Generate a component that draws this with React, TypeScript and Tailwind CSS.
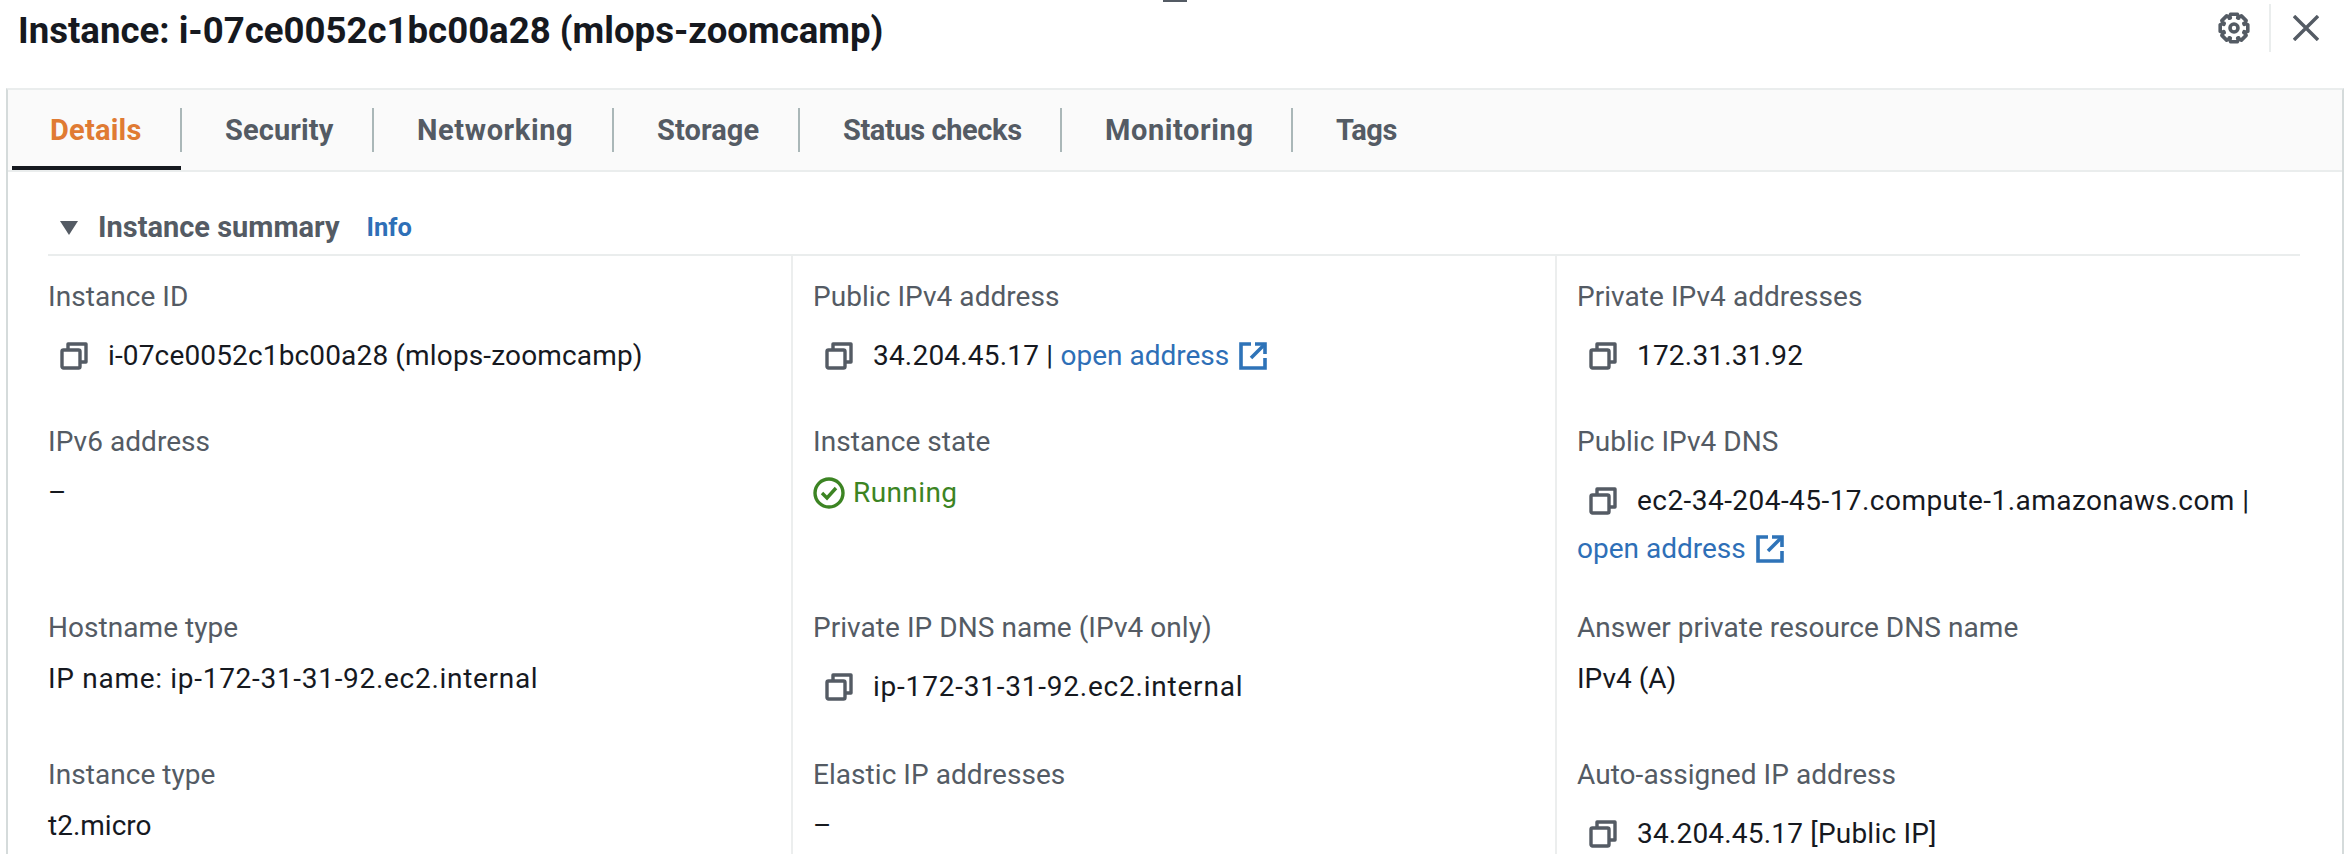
import React from "react";

const Copy = () => (
  <svg viewBox="0 0 28 28" className="w-[28px] h-[28px] shrink-0 mr-[20px]" fill="none" stroke="#545b64" strokeWidth="3.4" strokeLinejoin="round">
    <rect x="2" y="8" width="18" height="18" rx="1.5" />
    <path d="M8 8V2h18v18h-6" />
  </svg>
);

const External = () => (
  <svg viewBox="0 0 28 28" className="inline-block w-[28px] h-[28px] ml-[10px] align-[-5px]" fill="none" stroke="#2e73b8" strokeWidth="3.6" strokeLinejoin="miter">
    <path d="M12 2H2v24h24V16" />
    <path d="M16 2h10v10" />
    <path d="M26 2 12 16" />
  </svg>
);

const Gear = () => {
  const pts: string[] = [];
  const teeth = 8;
  for (let i = 0; i < teeth; i++) {
    const a = (i * 2 * Math.PI) / teeth - Math.PI / 2;
    const w = 0.24;
    const g = 0.2;
    const p = (r: number, t: number) => `${(16 + r * Math.cos(t)).toFixed(2)},${(16 + r * Math.sin(t)).toFixed(2)}`;
    pts.push(p(14.2, a - w), p(14.2, a + w), p(10.8, a + w + g), p(10.8, a + Math.PI / 4 - w - g));
  }
  return (
    <svg viewBox="0 0 32 32" className="w-[32px] h-[32px]" fill="none" stroke="#545b64" strokeWidth="3.6" strokeLinejoin="round">
      <polygon points={pts.join(" ")} />
      <circle cx="16" cy="16" r="4" />
    </svg>
  );
};

const Plain = ({ children, className = "" }: { children: React.ReactNode; className?: string }) => (
  <div className={`mt-[7px] leading-[48px] text-[#16191f] ${className}`}>{children}</div>
);

const Copied = ({ children, className = "" }: { children: React.ReactNode; className?: string }) => (
  <div className={`mt-[15px] leading-[48px] text-[#16191f] ${className}`}>
    <span className="inline-flex items-center h-[48px] pl-[12px] align-top">
      <Copy />
    </span>
    {children}
  </div>
);

const Open = () => (
  <a className="text-[#2e6fb7] whitespace-nowrap tracking-normal">
    open address
    <External />
  </a>
);

const Cell = ({ label, children, divider }: { label: string; children: React.ReactNode; divider?: boolean }) => (
  <div className={divider ? "border-l-2 border-[#eceeee] pl-[20px] pt-[21px] pr-[20px]" : "pl-[16px] pt-[21px] pr-[20px]"}>
    <div className="text-[#545b64] h-[40px] leading-[40px] tracking-[0.05px]">{label}</div>
    {children}
  </div>
);

const tabs: [string, string, string][] = [
  ["Security", "w-[192px]", "tracking-[0.1px]"],
  ["Networking", "w-[240px]", "tracking-[0.6px]"],
  ["Storage", "w-[186px]", "tracking-[0.1px]"],
  ["Status checks", "w-[262px]", "tracking-[-0.4px]"],
  ["Monitoring", "w-[231px]", "tracking-[0.6px]"],
];

export default function App() {
  return (
    <div className="h-[854px] w-full overflow-hidden bg-white font-['Roboto','Noto_Sans',sans-serif] text-[28px] relative">
      <div className="absolute left-[1163px] top-0 w-[24px] h-[2px] bg-[#545b64]" />
      <header className="h-[88px] flex items-start pl-[18px] pr-[33px]">
        <h1 className="text-[36.6px] font-bold text-[#16191f] leading-[62px] flex-1 whitespace-nowrap">
          Instance: i-07ce0052c1bc00a28 (mlops-zoomcamp)
        </h1>
        <div className="flex items-center h-[48px] mt-[4px]">
          <Gear />
          <div className="w-[2px] h-[48px] bg-[#eaeded] ml-[19px]" />
          <svg viewBox="0 0 26 26" className="w-[26px] h-[26px] ml-[22px]" fill="none" stroke="#545b64" strokeWidth="3.4">
            <path d="M1 1l24 24M25 1 1 25" />
          </svg>
        </div>
      </header>
      <section className="ml-[6px] w-[2338px] border-x-2 border-x-[#d5dbdb] border-t-2 border-t-[#eaeded] h-[800px]">
        <nav className="h-[82px] bg-[#fafafa] border-b-2 border-[#eaeded] flex items-start pl-[4px] font-bold text-[#545b64] text-[29px]">
          <div className="relative w-[170px] h-[80px]">
            <div className="h-[80px] pt-[2px] pl-[38px] flex items-center text-[#e07b33] tracking-[0.2px]">Details</div>
            <div className="absolute left-0 bottom-0 w-[169px] h-[4px] bg-[#16191f]" />
            <div className="absolute right-0 top-[18px] h-[44px] w-[2px] bg-[#aab7b8]" />
          </div>
          {tabs.map(([t, w, track]) => (
            <div key={t} className={`relative h-[80px] ${w}`}>
              <div className={`h-[80px] pt-[2px] pl-[43px] flex items-center ${track}`}>{t}</div>
              <div className="absolute right-0 top-[18px] h-[44px] w-[2px] bg-[#aab7b8]" />
            </div>
          ))}
          <div className="h-[80px] pt-[2px] pl-[43px] flex items-center tracking-[-0.5px]">Tags</div>
        </nav>
        <div className="mx-[24px] w-[2268px]">
          <div className="ml-[16px] h-[84px] border-b-2 border-[#eaeded] flex items-center pt-[29px] pl-[12px]">
            <svg viewBox="0 0 18 14" className="w-[18px] h-[14px] mr-[20px]">
              <path d="M0 0h18L9 14z" fill="#545b64" />
            </svg>
            <span className="font-bold text-[#545b64] text-[29px]">Instance summary</span>
            <span className="font-bold text-[#2e6fb7] text-[25.5px] ml-[27px]">Info</span>
          </div>
          <div className="grid grid-cols-[759px_764px_745px] grid-rows-[145px_186px_147px_auto]">
            <Cell label="Instance ID"><Copied className="tracking-[0.15px]">i-07ce0052c1bc00a28 (mlops-zoomcamp)</Copied></Cell>
            <Cell label="Public IPv4 address" divider><Copied className="tracking-[0.2px]">34.204.45.17 | <Open /></Copied></Cell>
            <Cell label="Private IPv4 addresses" divider><Copied className="tracking-[0.2px]">172.31.31.92</Copied></Cell>

            <Cell label="IPv6 address"><Plain>–</Plain></Cell>
            <Cell label="Instance state" divider>
              <Plain>
                <span className="flex items-center text-[#3c8423] tracking-[0.4px]">
                  <svg viewBox="0 0 32 32" className="w-[32px] h-[32px] mr-[8px]" fill="none" stroke="#3c8423" strokeWidth="3.4">
                    <circle cx="16" cy="16" r="14" />
                    <path d="M9 16l5 5 9-10" />
                  </svg>
                  Running
                </span>
              </Plain>
            </Cell>
            <Cell label="Public IPv4 DNS" divider>
              <Copied className="tracking-[0.45px]">ec2-34-204-45-17.compute-1.amazonaws.com | <Open /></Copied>
            </Cell>

            <Cell label="Hostname type"><Plain className="tracking-[0.7px]">IP name: ip-172-31-31-92.ec2.internal</Plain></Cell>
            <Cell label="Private IP DNS name (IPv4 only)" divider><Copied className="tracking-[0.78px]">ip-172-31-31-92.ec2.internal</Copied></Cell>
            <Cell label="Answer private resource DNS name" divider><Plain>IPv4 (A)</Plain></Cell>

            <Cell label="Instance type"><Plain>t2.micro</Plain></Cell>
            <Cell label="Elastic IP addresses" divider><Plain>–</Plain></Cell>
            <Cell label="Auto-assigned IP address" divider><Copied className="tracking-[0.2px]">34.204.45.17 [Public IP]</Copied></Cell>
          </div>
        </div>
      </section>
    </div>
  );
}
